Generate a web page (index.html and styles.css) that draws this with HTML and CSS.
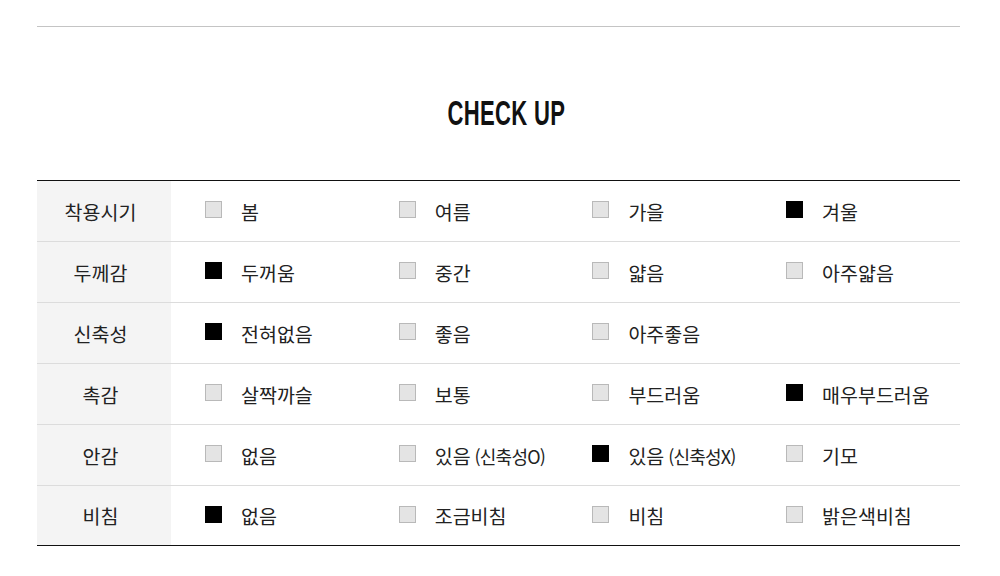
FILE: index.html
```html
<!DOCTYPE html>
<html lang="ko">
<head>
<meta charset="utf-8">
<link rel="stylesheet" href="styles.css">
</head>
<body>
<div class="page">
  <div class="topline"></div>
  <h2 class="title"><span>CHECK UP</span></h2>
  <div class="table">
    <div class="row">
      <div class="label">착용시기</div>
      <div class="opts">
        <div class="opt"><i class="box"></i><span>봄</span></div>
        <div class="opt"><i class="box"></i><span>여름</span></div>
        <div class="opt"><i class="box"></i><span>가을</span></div>
        <div class="opt"><i class="box on"></i><span>겨울</span></div>
      </div>
    </div>
    <div class="row">
      <div class="label">두께감</div>
      <div class="opts">
        <div class="opt"><i class="box on"></i><span>두꺼움</span></div>
        <div class="opt"><i class="box"></i><span>중간</span></div>
        <div class="opt"><i class="box"></i><span>얇음</span></div>
        <div class="opt"><i class="box"></i><span>아주얇음</span></div>
      </div>
    </div>
    <div class="row">
      <div class="label">신축성</div>
      <div class="opts">
        <div class="opt"><i class="box on"></i><span>전혀없음</span></div>
        <div class="opt"><i class="box"></i><span>좋음</span></div>
        <div class="opt"><i class="box"></i><span>아주좋음</span></div>
      </div>
    </div>
    <div class="row">
      <div class="label">촉감</div>
      <div class="opts">
        <div class="opt"><i class="box"></i><span>살짝까슬</span></div>
        <div class="opt"><i class="box"></i><span>보통</span></div>
        <div class="opt"><i class="box"></i><span>부드러움</span></div>
        <div class="opt"><i class="box on"></i><span>매우부드러움</span></div>
      </div>
    </div>
    <div class="row">
      <div class="label">안감</div>
      <div class="opts">
        <div class="opt"><i class="box"></i><span>없음</span></div>
        <div class="opt"><i class="box"></i><span>있음<small>(신축성O)</small></span></div>
        <div class="opt"><i class="box on"></i><span>있음<small>(신축성X)</small></span></div>
        <div class="opt"><i class="box"></i><span>기모</span></div>
      </div>
    </div>
    <div class="row">
      <div class="label">비침</div>
      <div class="opts">
        <div class="opt"><i class="box on"></i><span>없음</span></div>
        <div class="opt"><i class="box"></i><span>조금비침</span></div>
        <div class="opt"><i class="box"></i><span>비침</span></div>
        <div class="opt"><i class="box"></i><span>밝은색비침</span></div>
      </div>
    </div>
  </div>
</div>
</body>
</html>
```

FILE: styles.css
```css
html, body {
  margin: 0;
  padding: 0;
  background: #fff;
}
body {
  font-family: "Noto Sans CJK KR", "Noto Sans", sans-serif;
  color: #222;
}
.page {
  width: 923px;
  margin-left: 37px;
}
.topline {
  margin-top: 26px;
  border-top: 1px solid #c4c4c4;
}
.title {
  margin: 68px 0 50px;
  padding-left: 15px;
  height: 35px;
  text-align: center;
  font-family: "Liberation Sans", Arial, sans-serif;
  font-weight: bold;
  font-size: 35px;
  line-height: 35px;
  color: #111;
}
.title span {
  display: inline-block;
  transform: scaleX(0.63);
  letter-spacing: 0.5px;
}
.table {
  border-top: 1px solid #111;
  border-bottom: 1px solid #111;
}
.row {
  display: flex;
  height: 60px;
  border-bottom: 1px solid #dcdcdc;
}
.row:last-child {
  border-bottom: none;
  height: 59px;
}
.label {
  width: 134px;
  flex: none;
  box-sizing: border-box;
  padding-right: 7px;
  background: #f4f4f4;
  display: flex;
  align-items: center;
  justify-content: center;
  font-size: 19.5px;
}
.opts {
  flex: 1;
  display: grid;
  grid-template-columns: repeat(4, 193.7px);
  padding-left: 34px;
  align-items: center;
}
.opt {
  display: flex;
  align-items: center;
  font-size: 19.5px;
}
.opt small {
  margin-left: 4px;
  font-size: 18px;
  letter-spacing: -0.8px;
}
.box {
  width: 15px;
  height: 15px;
  flex: none;
  border: 1px solid #b9b9b9;
  background: #e4e4e4;
  margin-right: 19px;
  margin-top: -3px;
}
.box.on {
  border-color: #000;
  background: #000;
}
```
